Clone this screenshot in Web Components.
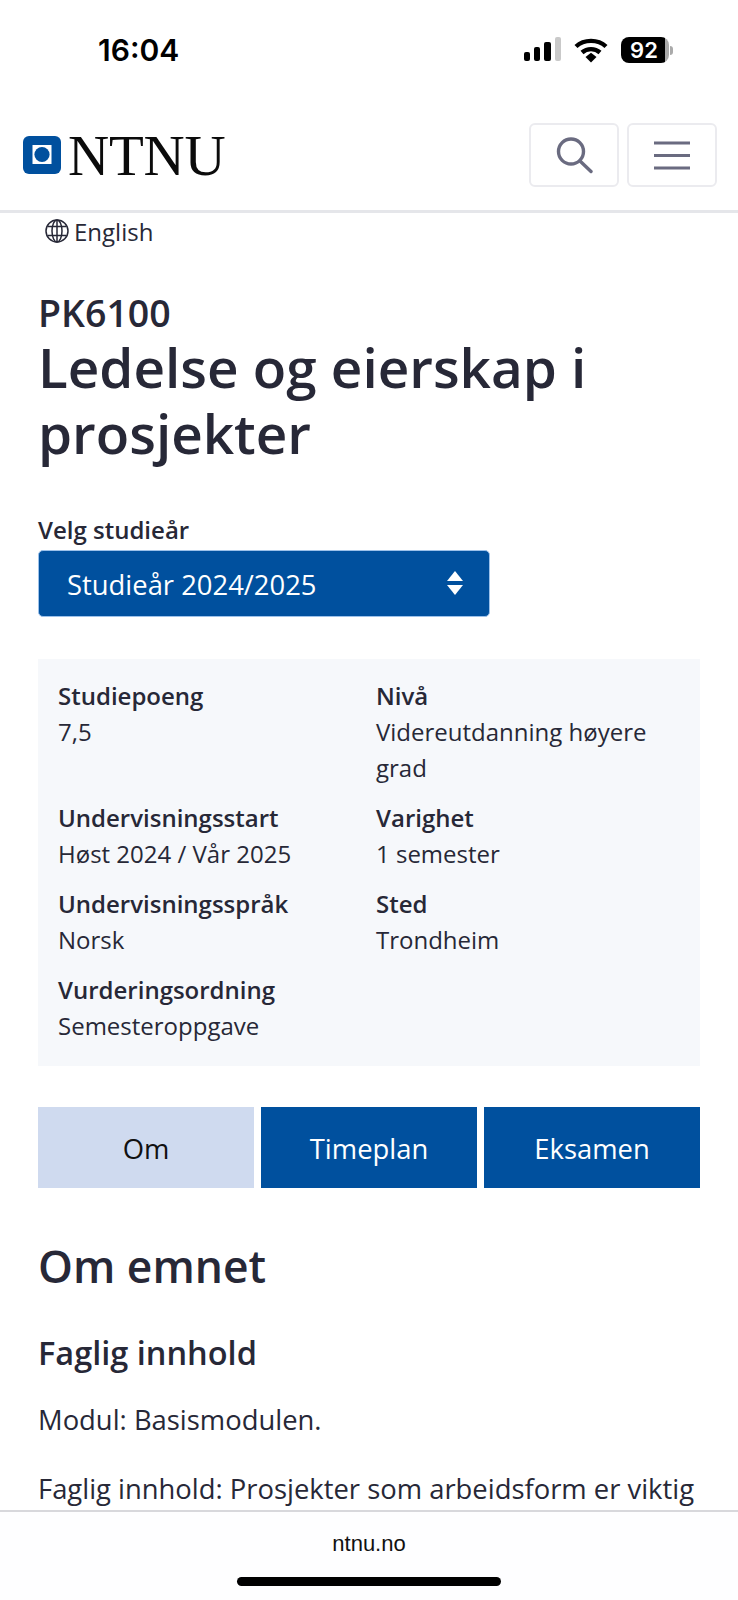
<!DOCTYPE html>
<html lang="nb">
<head>
<meta charset="utf-8">
<title>PK6100</title>
<style>
  html, body { margin: 0; padding: 0; background: #fff; }
  body { height: 1600px; overflow: hidden; position: relative; font-family: "Open Sans", sans-serif; color: #272837; }
</style>
</head>
<body>
<status-bar></status-bar>
<site-header></site-header>
<course-page></course-page>
<browser-bar>ntnu.no</browser-bar>

<script>
class StatusBar extends HTMLElement {
  constructor() {
    super();
    this.attachShadow({ mode: "open" });
    this.shadowRoot.innerHTML = `
      <style>
        :host { display: flex; justify-content: space-between; align-items: center; height: 100px; padding: 0 65px 0 98px; box-sizing: border-box; color: #000; }
        .time { font: 600 30px Inter, sans-serif; letter-spacing: 0; }
        .icons { display: flex; align-items: center; gap: 13px; }
        .battery { display: flex; align-items: center; gap: 1px; }
        .level { width: 48px; height: 26px; border-radius: 8px; background: linear-gradient(90deg, #000 92%, #aaa 92%); color: #fff; font: 600 22px Inter, sans-serif; text-align: center; line-height: 26px; padding-right: 2px; box-sizing: border-box; }
        .cap { width: 3px; height: 9px; background: #aaa; border-radius: 0 3px 3px 0; }
      </style>
      <div class="time">16:04</div>
      <div class="icons">
        <svg width="37" height="26" viewBox="0 0 37 26">
          <rect x="0" y="15" width="6" height="9" rx="2" fill="#000"/>
          <rect x="10" y="10" width="6" height="14" rx="2" fill="#000"/>
          <rect x="20" y="5" width="7" height="19" rx="2" fill="#000"/>
          <rect x="31" y="0" width="6" height="24" rx="2" fill="#c9c9c9"/>
        </svg>
        <svg width="34" height="26" viewBox="0 0 34 26">
          <path d="M2 9.500C10 2 24 2 32 9.500" fill="none" stroke="#000" stroke-width="4.400"/>
          <path d="M8 15.500C13 11 21 11 26 15.500" fill="none" stroke="#000" stroke-width="4.400"/>
          <path d="M11.500 20L17 15.800 22.500 20 17 25.500Z" fill="#000"/>
        </svg>
        <div class="battery"><div class="level">92</div><div class="cap"></div></div>
      </div>`;
  }
}
customElements.define("status-bar", StatusBar);

class SiteHeader extends HTMLElement {
  constructor() {
    super();
    this.attachShadow({ mode: "open" });
    this.shadowRoot.innerHTML = `
      <style>
        :host { display: flex; justify-content: space-between; align-items: center; height: 113px; padding: 0 21px 0 23px; box-sizing: border-box; border-bottom: 3px solid #e5e6ea; }
        .logo { display: flex; align-items: center; gap: 7px; }
        .word { font: 400 57px/38px "Liberation Serif", serif; color: #0b0b0b; letter-spacing: -0.2px; padding-top: 2px; }
        .btns { display: flex; gap: 8px; }
        .btn { width: 90px; height: 64px; box-sizing: border-box; border: 2px solid #ebebef; border-radius: 6px; display: flex; align-items: center; justify-content: center; background: #fff; }
      </style>
      <div class="logo">
        <svg width="38" height="38" viewBox="0 0 38 38">
          <rect width="38" height="38" rx="6" fill="#00509e"/>
          <rect x="9.500" y="9" width="19" height="19" fill="#fff"/>
          <circle cx="19" cy="18.500" r="7.600" fill="#00509e"/>
        </svg>
        <span class="word">NTNU</span>
      </div>
      <div class="btns">
        <div class="btn">
          <svg width="38" height="38" viewBox="0 0 38 38" fill="none" stroke="#6a6b80" stroke-width="3.400" stroke-linecap="round">
            <circle cx="16" cy="15.500" r="12.500"/>
            <path d="M25 25L36 35.500"/>
          </svg>
        </div>
        <div class="btn">
          <svg width="38" height="30" viewBox="0 0 38 30" fill="none" stroke="#6a6b80" stroke-width="3">
            <path d="M1 3H37M1 15.500H37M1 28H37"/>
          </svg>
        </div>
      </div>`;
  }
}
customElements.define("site-header", SiteHeader);

class LangLink extends HTMLElement {
  constructor() {
    super();
    this.attachShadow({ mode: "open" });
    this.shadowRoot.innerHTML = `
      <style>
        :host { display: flex; align-items: center; gap: 5px; margin-left: 7px; height: 36px; font-size: 24px; }
      </style>
      <svg width="24" height="24" viewBox="0 0 24 24" fill="none" stroke="#272837" stroke-width="1.500">
        <circle cx="12" cy="12" r="11"/>
        <ellipse cx="12" cy="12" rx="5" ry="11"/>
        <path d="M2.500 7.500H21.500M2.500 16.500H21.500M12 1V23"/>
      </svg>
      <slot></slot>`;
  }
}
customElements.define("lang-link", LangLink);

class YearSelect extends HTMLElement {
  constructor() {
    super();
    this.attachShadow({ mode: "open" });
    this.shadowRoot.innerHTML = `
      <style>
        :host { display: block; }
        label { display: block; font-size: 24px; font-weight: 600; line-height: 34px; }
        .box { width: 452px; height: 67px; margin-top: 3px; box-sizing: border-box; border: 1px solid #9cc1ea; border-radius: 5px; background: #00509e; color: #fff; font-size: 27.400px; display: flex; align-items: center; justify-content: space-between; padding: 2px 26px 0 28px; }
        svg { margin-top: -4px; }
      </style>
      <label>Velg studieår</label>
      <div class="box">
        <slot></slot>
        <svg width="16" height="24" viewBox="0 0 16 24" fill="#fff">
          <path d="M8 0L16 10H0Z"/>
          <path d="M0 14H16L8 24Z"/>
        </svg>
      </div>`;
  }
}
customElements.define("year-select", YearSelect);

class FactGrid extends HTMLElement {
  constructor() {
    super();
    this.attachShadow({ mode: "open" });
    this.shadowRoot.innerHTML = `
      <style>
        :host { display: grid; grid-template-columns: 318px 1fr; row-gap: 14px; padding: 19px 20px 22px 20px; background: #f6f8fb; }
      </style>
      <slot></slot>`;
  }
}
customElements.define("fact-grid", FactGrid);

class FactItem extends HTMLElement {
  constructor() {
    super();
    this.attachShadow({ mode: "open" });
    this.shadowRoot.innerHTML = `
      <style>
        :host { display: block; font-size: 24px; line-height: 36px; }
        .name { font-weight: 600; }
      </style>
      <div class="name"></div>
      <div><slot></slot></div>`;
    this.shadowRoot.querySelector(".name").textContent = this.getAttribute("name");
  }
}
customElements.define("fact-item", FactItem);

class TabRow extends HTMLElement {
  constructor() {
    super();
    this.attachShadow({ mode: "open" });
    this.shadowRoot.innerHTML = `
      <style>
        :host { display: grid; grid-template-columns: repeat(3, 1fr); gap: 7px; }
      </style>
      <slot></slot>`;
  }
}
customElements.define("tab-row", TabRow);

class TabItem extends HTMLElement {
  constructor() {
    super();
    this.attachShadow({ mode: "open" });
    this.shadowRoot.innerHTML = `
      <style>
        :host { display: flex; align-items: center; justify-content: center; height: 81px; box-sizing: border-box; padding-top: 2px; font-size: 27.400px; background: #00509e; color: #fff; }
        :host([active]) { background: #cfdaef; color: #111; }
      </style>
      <slot></slot>`;
  }
}
customElements.define("tab-item", TabItem);

class CoursePage extends HTMLElement {
  constructor() {
    super();
    this.attachShadow({ mode: "open" });
    this.shadowRoot.innerHTML = `
      <style>
        :host { display: block; padding: 0 38px; }
        .code { font-size: 37.500px; font-weight: 600; line-height: 43px; margin-top: 42px; }
        h1 { font-size: 54.800px; font-weight: 600; line-height: 66px; margin: 0; }
        year-select { margin-top: 47px; }
        fact-grid { margin-top: 42px; }
        tab-row { margin-top: 41px; }
        h2 { font-size: 44.400px; font-weight: 600; line-height: 60px; margin: 48px 0 0; }
        h3 { font-size: 32.500px; font-weight: 600; line-height: 44px; margin: 35px 0 0; }
        p { font-size: 27.400px; line-height: 40px; margin: 25px 0 0; }
        p + p { margin-top: 29px; }
      </style>
      <lang-link>English</lang-link>
      <div class="code">PK6100</div>
      <h1>Ledelse og eierskap i prosjekter</h1>
      <year-select>Studieår 2024/2025</year-select>
      <fact-grid>
        <fact-item name="Studiepoeng">7,5</fact-item>
        <fact-item name="Nivå">Videreutdanning høyere grad</fact-item>
        <fact-item name="Undervisningsstart">Høst 2024 / Vår 2025</fact-item>
        <fact-item name="Varighet">1 semester</fact-item>
        <fact-item name="Undervisningsspråk">Norsk</fact-item>
        <fact-item name="Sted">Trondheim</fact-item>
        <fact-item name="Vurderingsordning">Semesteroppgave</fact-item>
      </fact-grid>
      <tab-row>
        <tab-item active>Om</tab-item>
        <tab-item>Timeplan</tab-item>
        <tab-item>Eksamen</tab-item>
      </tab-row>
      <h2>Om emnet</h2>
      <h3>Faglig innhold</h3>
      <p>Modul: Basismodulen.</p>
      <p>Faglig innhold: Prosjekter som arbeidsform er viktig</p>`;
  }
}
customElements.define("course-page", CoursePage);

class BrowserBar extends HTMLElement {
  constructor() {
    super();
    this.attachShadow({ mode: "open" });
    this.shadowRoot.innerHTML = `
      <style>
        :host { position: absolute; left: 0; right: 0; bottom: 0; height: 90px; box-sizing: border-box; border-top: 2px solid #d8d8dc; background: #fefeff; display: block; text-align: center; }
        .url { font: 400 22px/28px "Liberation Sans", sans-serif; color: #111; margin-top: 18px; }
        .home { position: absolute; left: 237px; bottom: 14px; width: 264px; height: 9px; border-radius: 5px; background: #000; }
      </style>
      <div class="url"><slot></slot></div>
      <div class="home"></div>`;
  }
}
customElements.define("browser-bar", BrowserBar);
</script>
</body>
</html>
